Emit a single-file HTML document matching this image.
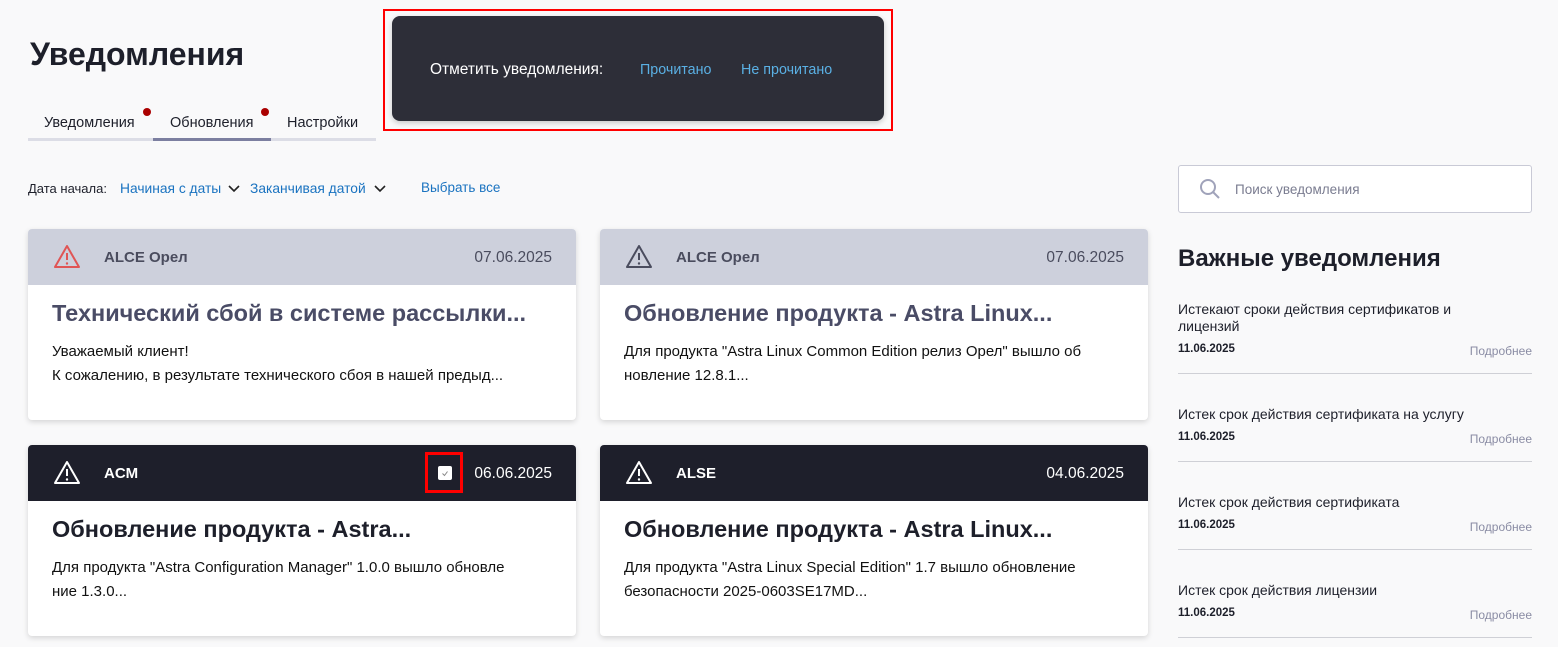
<!DOCTYPE html>
<html><head><meta charset="utf-8"><style>
*{margin:0;padding:0;box-sizing:border-box}
body{width:1558px;height:647px;background:#f9f9fa;font-family:"Liberation Sans","DejaVu Sans",sans-serif;position:relative;overflow:hidden;color:#1d1f2a}
svg{display:block}
.a{position:absolute;white-space:nowrap}
.card{position:absolute;width:548px;background:#fff;border-radius:4px;box-shadow:0 2px 6px rgba(0,0,0,.15);overflow:hidden}
.hd{height:56px;position:relative}
.hd .n{position:absolute;left:76px;top:20px;font-size:15px;font-weight:bold}
.hd .d{position:absolute;right:24px;top:20px;font-size:15.5px}
.hd svg{position:absolute;left:25px;top:15px}
.ti{position:absolute;left:24px;top:15px;font-size:23.5px;font-weight:bold;color:#1d1f2a}
.tx{position:absolute;left:24px;top:55px;font-size:15px;line-height:24px;color:#111}
.light .hd{background:#cdd0dc;color:#4a4c5e}
.light .ti{color:#4a4c66}
.dark .hd{background:#1e1f2b;color:#fff}
.imp{position:absolute;left:1178px;width:354px;border-bottom:1px solid #cfd0d6}
.imp .t{font-size:14px;line-height:17px;color:#1d1f2a}
.imp .dt{font-size:11.5px;font-weight:bold;margin-top:8px}
.imp .m{position:absolute;right:0;bottom:15px;font-size:12px;color:#8a8ca4}
</style></head><body>
<div class="a" style="left:30px;top:36px;font-size:32px;font-weight:bold">Уведомления</div>
<div class="a" style="left:44px;top:115px;font-size:14.5px">Уведомления</div>
<div class="a" style="left:143px;top:108px;width:8px;height:8px;border-radius:50%;background:#a00"></div>
<div class="a" style="left:170px;top:115px;font-size:14.5px">Обновления</div>
<div class="a" style="left:261px;top:108px;width:8px;height:8px;border-radius:50%;background:#a00"></div>
<div class="a" style="left:287px;top:115px;font-size:14.5px">Настройки</div>
<div class="a" style="left:28px;top:138px;width:348px;height:3px;background:#dcdde6"></div>
<div class="a" style="left:153px;top:138px;width:118px;height:3px;background:#7c7fa0"></div>

<div class="a" style="left:28px;top:181px;font-size:13px">Дата начала:</div>
<div class="a" style="left:120px;top:181px;font-size:13.8px;color:#1a73c0">Начиная с даты</div>
<svg class="a" style="left:228px;top:185px" width="12" height="8"><path d="M1 1l5 5 5-5" stroke="#222" stroke-width="1.6" fill="none"/></svg>
<div class="a" style="left:250px;top:181px;font-size:13.8px;color:#1a73c0">Заканчивая датой</div>
<svg class="a" style="left:374px;top:185px" width="12" height="8"><path d="M1 1l5 5 5-5" stroke="#222" stroke-width="1.6" fill="none"/></svg>
<div class="a" style="left:421px;top:180px;font-size:13.5px;color:#1a73c0">Выбрать все</div>

<div class="a" style="left:383px;top:9px;width:510px;height:122px;border:2px solid #f00"></div>
<div class="a" style="left:392px;top:16px;width:492px;height:105px;background:#2d2e38;border-radius:8px;box-shadow:0 2px 6px rgba(0,0,0,.2)"></div>
<div class="a" style="left:430px;top:61px;font-size:15.5px;color:#fff">Отметить уведомления:</div>
<div class="a" style="left:640px;top:62px;font-size:14.3px;color:#5ab0e4">Прочитано</div>
<div class="a" style="left:741px;top:62px;font-size:14.3px;color:#5ab0e4">Не прочитано</div>

<div class="card light" style="left:28px;top:229px;height:191px">
<div class="hd"><svg width="28" height="26" viewBox="0 0 28 26"><path d="M14 2L2 23h24z" fill="none" stroke="#e05555" stroke-width="2" stroke-linejoin="round"/><path d="M14 9v7" stroke="#e05555" stroke-width="2"/><circle cx="14" cy="19.5" r="1.2" fill="#e05555"/></svg><span class="n">ALCE Орел</span><span class="d">07.06.2025</span></div>
<div style="position:relative"><div class="ti">Технический сбой в системе рассылки...</div><div class="tx">Уважаемый клиент!<br>К сожалению, в результате технического сбоя в нашей предыд...</div></div></div>

<div class="card light" style="left:600px;top:229px;height:191px">
<div class="hd"><svg width="28" height="26" viewBox="0 0 28 26"><path d="M14 2L2 23h24z" fill="none" stroke="#4a4c5e" stroke-width="2" stroke-linejoin="round"/><path d="M14 9v7" stroke="#4a4c5e" stroke-width="2"/><circle cx="14" cy="19.5" r="1.2" fill="#4a4c5e"/></svg><span class="n">ALCE Орел</span><span class="d">07.06.2025</span></div>
<div style="position:relative"><div class="ti">Обновление продукта - Astra Linux...</div><div class="tx">Для продукта "Astra Linux Common Edition релиз Орел" вышло об<br>новление 12.8.1...</div></div></div>

<div class="card dark" style="left:28px;top:445px;height:191px">
<div class="hd"><svg width="28" height="26" viewBox="0 0 28 26"><path d="M14 2L2 23h24z" fill="none" stroke="#fff" stroke-width="2" stroke-linejoin="round"/><path d="M14 9v7" stroke="#fff" stroke-width="2"/><circle cx="14" cy="19.5" r="1.2" fill="#fff"/></svg><span class="n">ACM</span><span class="d">06.06.2025</span>
<div style="position:absolute;left:397px;top:7px;width:38px;height:41px;border:3px solid #f00"></div>
<div style="position:absolute;left:410px;top:21px;width:14px;height:14px;background:#fff;border-radius:2px"><svg width="14" height="14" style="position:static"><path d="M4.5 7.5l2 2 3-4" stroke="#888" stroke-width="1" fill="none"/></svg></div></div>
<div style="position:relative"><div class="ti">Обновление продукта - Astra...</div><div class="tx">Для продукта "Astra Configuration Manager" 1.0.0 вышло обновле<br>ние 1.3.0...</div></div></div>

<div class="card dark" style="left:600px;top:445px;height:191px">
<div class="hd"><svg width="28" height="26" viewBox="0 0 28 26"><path d="M14 2L2 23h24z" fill="none" stroke="#fff" stroke-width="2" stroke-linejoin="round"/><path d="M14 9v7" stroke="#fff" stroke-width="2"/><circle cx="14" cy="19.5" r="1.2" fill="#fff"/></svg><span class="n">ALSE</span><span class="d">04.06.2025</span></div>
<div style="position:relative"><div class="ti">Обновление продукта - Astra Linux...</div><div class="tx">Для продукта "Astra Linux Special Edition" 1.7 вышло обновление<br>безопасности 2025-0603SE17MD...</div></div></div>

<div class="a" style="left:1178px;top:165px;width:354px;height:48px;background:#fff;border:1px solid #c9cad6;border-radius:3px"></div>
<svg class="a" style="left:1199px;top:178px" width="22" height="22"><circle cx="9" cy="9" r="7" stroke="#a0a3ba" stroke-width="2" fill="none"/><path d="M14 14l6 6" stroke="#a0a3ba" stroke-width="2"/></svg>
<div class="a" style="left:1235px;top:182px;font-size:13.5px;color:#7a7c90">Поиск уведомления</div>
<div class="a" style="left:1178px;top:245px;font-size:24px;font-weight:bold">Важные уведомления</div>

<div class="imp" style="top:301px;height:73px"><div class="t">Истекают сроки действия сертификатов и<br>лицензий</div><div class="dt">11.06.2025</div><div class="m">Подробнее</div></div>
<div class="imp" style="top:406px;height:56px"><div class="t">Истек срок действия сертификата на услугу</div><div class="dt">11.06.2025</div><div class="m">Подробнее</div></div>
<div class="imp" style="top:494px;height:56px"><div class="t">Истек срок действия сертификата</div><div class="dt">11.06.2025</div><div class="m">Подробнее</div></div>
<div class="imp" style="top:582px;height:56px"><div class="t">Истек срок действия лицензии</div><div class="dt">11.06.2025</div><div class="m">Подробнее</div></div>
</body></html>
